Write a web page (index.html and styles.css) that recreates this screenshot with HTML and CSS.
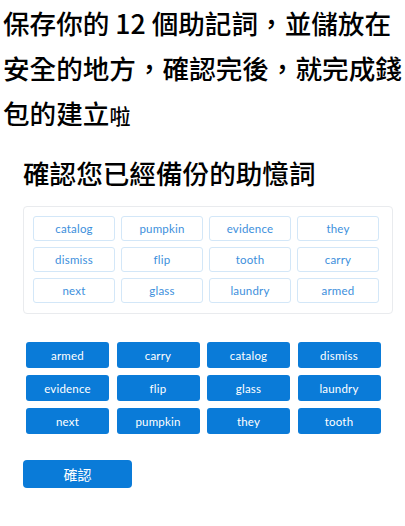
FILE: index.html
```html
<!DOCTYPE html>
<html lang="zh-Hant">
<head>
<meta charset="utf-8">
<link rel="stylesheet" href="styles.css">
</head>
<body>
<div class="page">
  <p class="intro">保存你的 12 個助記詞，並儲放在安全的地方，確認完後，就完成錢包的建立<span class="small">啦</span></p>
  <section class="confirm">
    <h2 class="title">確認您已經備份的助憶詞</h2>
    <div class="card">
      <div class="slot">catalog</div>
      <div class="slot">pumpkin</div>
      <div class="slot">evidence</div>
      <div class="slot">they</div>
      <div class="slot">dismiss</div>
      <div class="slot">flip</div>
      <div class="slot">tooth</div>
      <div class="slot">carry</div>
      <div class="slot">next</div>
      <div class="slot">glass</div>
      <div class="slot">laundry</div>
      <div class="slot">armed</div>
    </div>
    <div class="words">
      <button class="word">armed</button>
      <button class="word">carry</button>
      <button class="word">catalog</button>
      <button class="word">dismiss</button>
      <button class="word">evidence</button>
      <button class="word">flip</button>
      <button class="word">glass</button>
      <button class="word">laundry</button>
      <button class="word">next</button>
      <button class="word">pumpkin</button>
      <button class="word">they</button>
      <button class="word">tooth</button>
    </div>
    <button class="submit">確認</button>
  </section>
</div>
</body>
</html>
```
FILE: styles.css
```css
html, body {
  margin: 0;
  padding: 0;
  background: #ffffff;
}

.page {
  padding: 0 0 0 3px;
  font-family: "Noto Sans CJK TC", "Noto Sans", sans-serif;
  color: #000000;
}

.intro {
  margin: 0;
  font-size: 26.6px;
  font-weight: 500;
  line-height: 45px;
}

.intro .small {
  font-size: 21px;
  line-height: 1;
}

.confirm {
  padding-left: 20px;
  display: flex;
  flex-direction: column;
  align-items: flex-start;
}

.title {
  margin: 20px 0 0 0;
  font-size: 26.6px;
  font-weight: 500;
  line-height: 36px;
}

.card {
  margin-top: 15px;
  box-sizing: border-box;
  width: 370px;
  border: 1px solid #e9ebee;
  border-radius: 4px;
  padding: 9px 9px 10px 9px;
  display: grid;
  grid-template-columns: repeat(4, 82px);
  grid-auto-rows: 25px;
  column-gap: 6px;
  row-gap: 6px;
}

.slot {
  box-sizing: border-box;
  border: 1px solid #d3e7f8;
  border-radius: 3px;
  display: flex;
  align-items: center;
  justify-content: center;
  font-family: Lato, "Open Sans", sans-serif;
  font-size: 11.5px;
  color: #3d8fdc;
  letter-spacing: 0.2px;
}

.words {
  margin: 28px 0 0 3px;
  display: grid;
  grid-template-columns: repeat(4, 83px);
  grid-auto-rows: 26px;
  column-gap: 7.5px;
  row-gap: 7px;
}

.word {
  margin: 0;
  padding: 0;
  border: none;
  border-radius: 3px;
  background: #0a7bd8;
  color: #ffffff;
  font-family: Lato, "Open Sans", sans-serif;
  font-size: 11.5px;
  letter-spacing: 0.2px;
}

.submit {
  margin-top: 26px;
  width: 109px;
  height: 28px;
  padding: 0;
  border: none;
  border-radius: 4px;
  background: #0a7bd8;
  color: #ffffff;
  font-family: "Noto Sans CJK TC", sans-serif;
  font-size: 14px;
}
```
